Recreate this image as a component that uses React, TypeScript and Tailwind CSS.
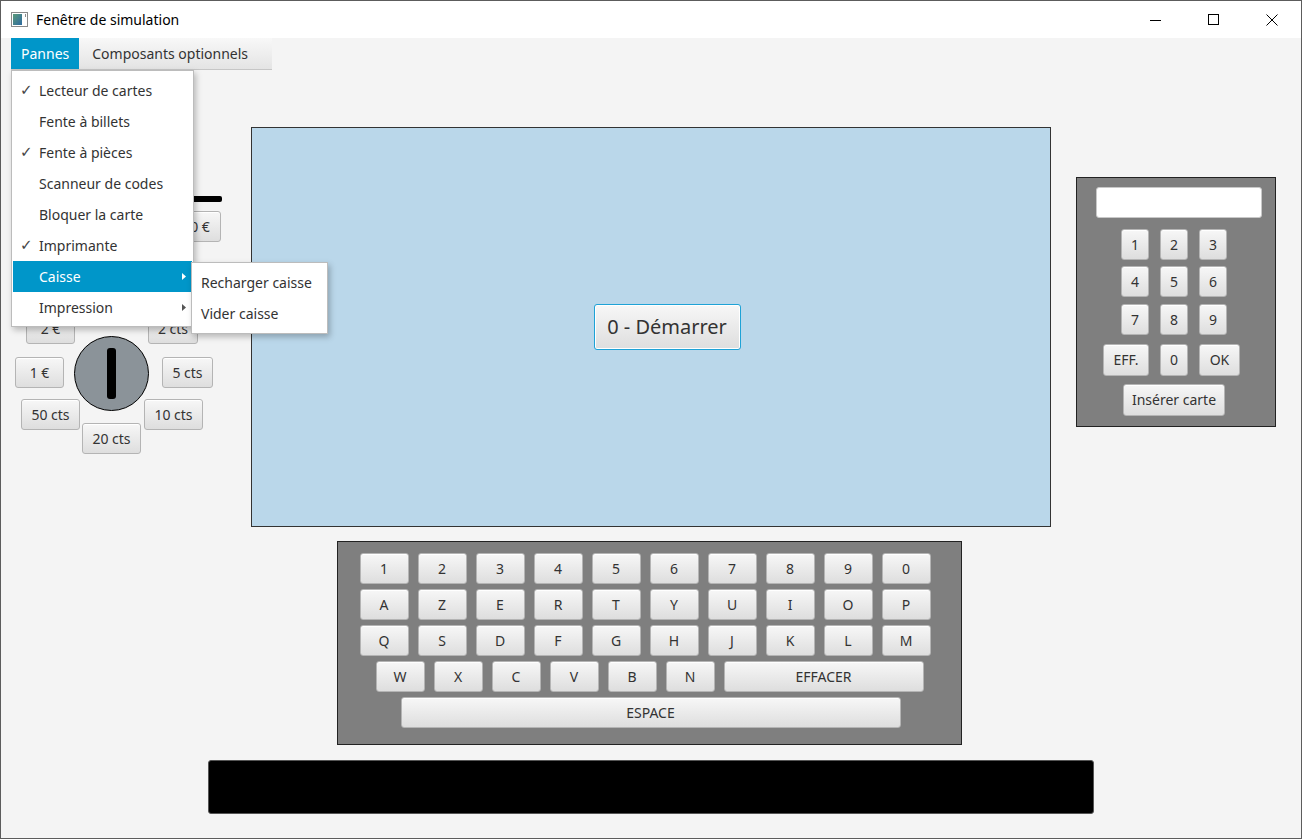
import React from "react";

// Button look shared by every key of the simulator (JavaFX-like)
const btn =
	"flex items-center justify-center rounded-[3px] border border-[#b4b4b4] bg-linear-to-b from-[#f7f7f7] to-[#dedede] shadow-[inset_0_1px_0_#ffffff] text-[#333333] text-[14px] leading-none";

const menuItems = [
	{ label: "Lecteur de cartes", checked: true },
	{ label: "Fente à billets" },
	{ label: "Fente à pièces", checked: true },
	{ label: "Scanneur de codes" },
	{ label: "Bloquer la carte" },
	{ label: "Imprimante", checked: true },
	{ label: "Caisse", sub: true, active: true },
	{ label: "Impression", sub: true },
];

const keyRows = [
	["1", "2", "3", "4", "5", "6", "7", "8", "9", "0"],
	["A", "Z", "E", "R", "T", "Y", "U", "I", "O", "P"],
	["Q", "S", "D", "F", "G", "H", "J", "K", "L", "M"],
];

const coins = [
	{ label: "1 ct", cls: "left-[78px] top-0 w-[46px]" },
	{ label: "2 €", cls: "left-[15px] top-[23px] w-[49px]" },
	{ label: "2 cts", cls: "left-[137px] top-[23px] w-[50px]" },
	{ label: "1 €", cls: "left-[4px] top-[67px] w-[49px]" },
	{ label: "5 cts", cls: "left-[151px] top-[67px] w-[51px]" },
	{ label: "50 cts", cls: "left-[10px] top-[109px] w-[59px]" },
	{ label: "10 cts", cls: "left-[133px] top-[109px] w-[59px]" },
	{ label: "20 cts", cls: "left-[71px] top-[133px] w-[59px]" },
];

const WindowIcon = () => (
	<svg width="17" height="15" viewBox="0 0 17 15">
		<defs>
			<linearGradient id="wi" x1="0" y1="0" x2="1" y2="1">
				<stop offset="0" stopColor="#5a9a7a" />
				<stop offset="1" stopColor="#2f6aa0" />
			</linearGradient>
		</defs>
		<rect x="0.5" y="0.5" width="16" height="14" fill="#ffffff" stroke="#8a8a8a" />
		<rect x="2" y="2" width="9" height="11" fill="url(#wi)" />
		<rect x="14" y="2" width="1" height="3" fill="#8a8a8a" />
	</svg>
);

const TitleBar = () => (
	<div className="flex h-[37px] items-center bg-white">
		<div className="ml-[10px] mr-[8px] flex items-center">
			<WindowIcon />
		</div>
		<span className="text-[14px] text-black">Fenêtre de simulation</span>
		<div className="ml-auto flex h-full">
			<div className="flex w-[58px] items-center justify-center">
				<svg width="12" height="12" viewBox="0 0 12 12">
					<line x1="0" y1="6.5" x2="11" y2="6.5" stroke="#000" strokeWidth="1" />
				</svg>
			</div>
			<div className="flex w-[58px] items-center justify-center">
				<svg width="12" height="12" viewBox="0 0 12 12">
					<rect x="0.5" y="0.5" width="10" height="10" fill="none" stroke="#000" strokeWidth="1" />
				</svg>
			</div>
			<div className="flex w-[58px] items-center justify-center">
				<svg width="12" height="12" viewBox="0 0 12 12">
					<path d="M0.5 0.5 L11.5 11.5 M11.5 0.5 L0.5 11.5" stroke="#000" strokeWidth="1" />
				</svg>
			</div>
		</div>
	</div>
);

const Arrow = ({ color }: { color: string }) => (
	<svg width="4" height="7" viewBox="0 0 4 7">
		<path d="M0 0 L4 3.5 L0 7 Z" fill={color} />
	</svg>
);

const PannesMenu = () => (
	<>
		<div className="absolute left-[10px] top-[32px] w-[183px] border border-[#bcbcbc] bg-white px-px pt-[4px] pb-[3px] shadow-[2px_3px_6px_rgba(0,0,0,0.25)]">
			{menuItems.map((item) => (
				<div
					key={item.label}
					className={
						"flex h-[31px] items-center text-[14px] " +
						(item.active ? "bg-[#0096c9] text-white" : "text-[#333333]")
					}
				>
					<span className="w-[26px] pl-[7px] font-['DejaVu_Sans',sans-serif] text-[15px] text-[#444]">
						{item.checked ? "✓" : ""}
					</span>
					<span>{item.label}</span>
					{item.sub && (
						<span className="ml-auto mr-[6px] flex">
							<Arrow color={item.active ? "#ffffff" : "#555555"} />
						</span>
					)}
				</div>
			))}
		</div>
		<div className="absolute left-[190px] top-[224px] w-[137px] border border-[#bcbcbc] bg-white pt-[4px] pb-[4px] shadow-[2px_3px_6px_rgba(0,0,0,0.25)]">
			{["Recharger caisse", "Vider caisse"].map((t) => (
				<div key={t} className="flex h-[31px] items-center pl-[9px] text-[14px] text-[#333333]">
					{t}
				</div>
			))}
		</div>
	</>
);

const LeftPanel = () => (
	<div className="ml-[10px] flex w-[240px] flex-col">
		{/* fente à billets */}
		<div className="ml-[30px] mt-[69px] h-[6px] w-[181px] rounded-[2px] bg-black" />
		<div className="mt-[9px] flex justify-end gap-[8px] pr-[30px]">
			<div className={btn + " h-[31px] w-[44px]"}>5 €</div>
			<div className={btn + " h-[31px] w-[50px]"}>10 €</div>
			<div className={btn + " h-[31px] w-[50px]"}>20 €</div>
		</div>
		{/* fente à pièces */}
		<div className="relative mt-[48px] h-[165px]">
			<div className="absolute left-[63px] top-[46px] flex h-[75px] w-[75px] items-center justify-center rounded-full border border-black bg-[#8b9399]">
				<div className="h-[51px] w-[9px] rounded-[3px] bg-black" />
			</div>
			{coins.map((c) => (
				<div key={c.label} className={"absolute h-[31px] " + btn + " " + c.cls}>
					{c.label}
				</div>
			))}
		</div>
	</div>
);

const Numpad = () => (
	<div className="ml-[25px] mt-[50px] flex h-[250px] w-[200px] flex-col border border-[#222222] bg-[#7f7f7f]">
		<div className="ml-[19px] mt-[9px] h-[31px] w-[166px] rounded-[3px] border border-[#c8c8c8] bg-white" />
		<div className="ml-[27px] mt-[11px] grid grid-cols-[45px_28px_40px] gap-x-[11px]">
			{["1", "2", "3", "4", "5", "6", "7", "8", "9"].map((n, i) => (
				<div
					key={n}
					className={
						btn +
						" h-[31px] w-[28px] " +
						(i % 3 === 0 ? "justify-self-end" : "justify-self-start") +
						(i >= 3 && i < 6 ? " mt-[6px]" : "") +
						(i >= 6 ? " mt-[7px]" : "")
					}
				>
					{n}
				</div>
			))}
			<div className={btn + " mt-[9px] h-[32px] w-[46px] justify-self-end"}>EFF.</div>
			<div className={btn + " mt-[9px] h-[32px] w-[28px]"}>0</div>
			<div className={btn + " mt-[9px] h-[32px] w-[41px]"}>OK</div>
		</div>
		<div className={btn + " ml-[46px] mt-[8px] h-[32px] w-[102px]"}>Insérer carte</div>
	</div>
);

const Keyboard = () => (
	<div className="mx-auto mt-[14px] flex h-[204px] w-[625px] translate-x-[-2px] flex-col border border-[#222222] bg-[#7f7f7f] pt-[11px]">
		{keyRows.map((row, r) => (
			<div key={r} className={"ml-[22px] flex gap-[9px] " + (r > 0 ? "mt-[5px]" : "")}>
				{row.map((k) => (
					<div key={k} className={btn + " h-[31px] w-[49px]"}>
						{k}
					</div>
				))}
			</div>
		))}
		<div className="ml-[38px] mt-[5px] flex gap-[9px]">
			{["W", "X", "C", "V", "B", "N"].map((k) => (
				<div key={k} className={btn + " h-[31px] w-[49px]"}>
					{k}
				</div>
			))}
			<div className={btn + " h-[31px] w-[200px]"}>EFFACER</div>
		</div>
		<div className={btn + " ml-[63px] mt-[5px] h-[31px] w-[500px]"}>ESPACE</div>
	</div>
);

export default function App() {
	return (
		<div className="flex h-[839px] w-[1302px] flex-col overflow-hidden border border-[#5c5c5c] bg-[#f4f4f4] font-['Segoe_UI','Noto_Sans',sans-serif]">
			<TitleBar />
			<div className="relative flex flex-1 flex-col">
				{/* menu bar */}
				<div className="ml-[10px] flex h-[32px] w-[261px] border-b border-[#c6c6c6] bg-linear-to-b from-[#f8f8f8] to-[#e4e4e4] text-[14px]">
					<div className="flex items-center bg-[#0096c9] px-[10px] text-white">Pannes</div>
					<div className="flex items-center px-[13px] text-[#333333]">Composants optionnels</div>
				</div>

				<div className="flex items-start pt-[57px]">
					<LeftPanel />
					<div className="flex h-[400px] w-[800px] items-center justify-center border border-[#333333] bg-[#bad7ea]">
						<div className="flex h-[46px] w-[147px] translate-x-[16px] items-center justify-center rounded-[3px] border border-[#1ea2d6] bg-linear-to-b from-[#f7f7f7] to-[#dedede] shadow-[inset_0_0_0_1px_#ffffff] text-[20px] text-[#333333]">
							0 - Démarrer
						</div>
					</div>
					<Numpad />
				</div>

				<Keyboard />

				<div className="mx-auto mt-[15px] h-[54px] w-[886px] rounded-[3px] border border-[#555555] bg-black" />

				<PannesMenu />
			</div>
		</div>
	);
}
